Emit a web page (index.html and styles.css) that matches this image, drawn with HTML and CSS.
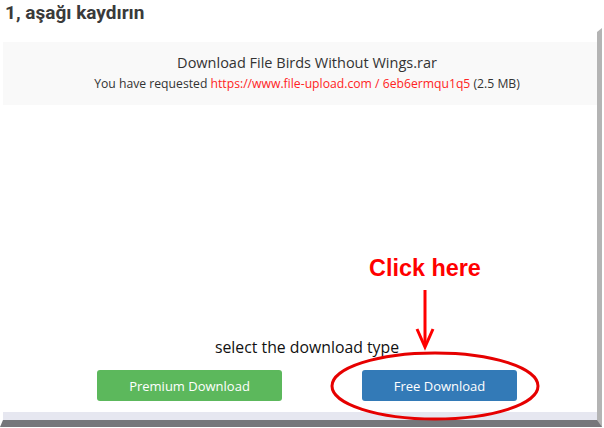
FILE: index.html
```html
<!DOCTYPE html>
<html lang="tr">
<head>
    <meta charset="UTF-8">
    <title>Download File Birds Without Wings.rar</title>
    <link rel="stylesheet" href="styles.css">
</head>
<body>
    <div class="page">
        <h1 class="step-title">1, aşağı kaydırın</h1>

        <div class="panel">
            <div class="file-info">
                <div class="file-name">Download File Birds Without Wings.rar</div>
                <div class="file-request">You have requested <a href="#">https://www.file-upload.com / 6eb6ermqu1q5</a> (2.5 MB)</div>
            </div>

            <div class="panel-body"></div>

            <div class="download-type">select the download type</div>
            <div class="buttons">
                <button class="btn btn-premium">Premium Download</button>
                <button class="btn btn-free">Free Download</button>
            </div>
            <div class="panel-footer"></div>
        </div>

        <!-- annotation drawn over the page -->
        <div class="click-label">Click here</div>
        <svg class="annotation" width="604" height="428" viewBox="0 0 604 428">
            <line x1="425" y1="290" x2="425" y2="345" stroke="#f00" stroke-width="3"/>
            <polyline points="417,329 425,347 433,329" fill="none" stroke="#f00" stroke-width="3" stroke-linejoin="miter"/>
            <ellipse cx="435" cy="386" rx="103" ry="33" fill="none" stroke="#e60000" stroke-width="3"/>
        </svg>
    </div>
</body>
</html>
```

FILE: styles.css
```css
body {
    margin: 0;
    background: #fff;
    font-family: "Open Sans", "DejaVu Sans", sans-serif;
}
.page {
    position: relative;
    width: 604px;
    height: 428px;
    overflow: hidden;
}
.step-title {
    margin: 0 0 3px 0;
    padding: 1px 0 0 5px;
    font-family: Roboto, "Liberation Sans", sans-serif;
    font-size: 19px;
    font-weight: 700;
    line-height: 24px;
    color: #3a3a3a;
}
.panel {
    width: 594px;
    border-left: 3px solid transparent;
    border-top: 4px solid transparent;
    border-right: 5px solid #b4b4b4;
    border-bottom: 7px solid #76777b;
    padding-top: 10px;
    background: #fff;
    background-clip: padding-box;
}
.file-info {
    background: #f9f9f9;
    height: 63px;
    box-sizing: border-box;
    padding: 11px 0 0 14px;
    text-align: center;
    color: #333;
}
.file-name {
    font-size: 14.5px;
    line-height: 20px;
}
.file-request {
    margin-top: 3px;
    font-size: 12.2px;
    line-height: 16px;
}
.file-request a {
    color: #ff2424;
    text-decoration: none;
}
.panel-body {
    height: 232px;
}
.download-type {
    text-align: center;
    font-size: 15.8px;
    line-height: 20px;
    color: #111;
    padding-left: 14px;
}
.buttons {
    display: flex;
    padding: 13px 0 11px 94px;
}
.btn {
    height: 31px;
    border: none;
    border-radius: 3px;
    color: #fff;
    font-family: inherit;
    font-size: 13px;
    cursor: pointer;
}
.btn-premium {
    width: 185px;
    background: #5cb85c;
}
.btn-free {
    width: 155px;
    margin-left: 80px;
    background: #337ab7;
}
.panel-footer {
    height: 8px;
    background: #e6e7f0;
}
.click-label {
    position: absolute;
    left: 369px;
    top: 257px;
    font-family: "Liberation Sans", Arial, sans-serif;
    font-weight: 700;
    font-size: 23.4px;
    line-height: 23px;
    color: #f00;
}
.annotation {
    position: absolute;
    left: 0;
    top: 0;
    pointer-events: none;
}
```
